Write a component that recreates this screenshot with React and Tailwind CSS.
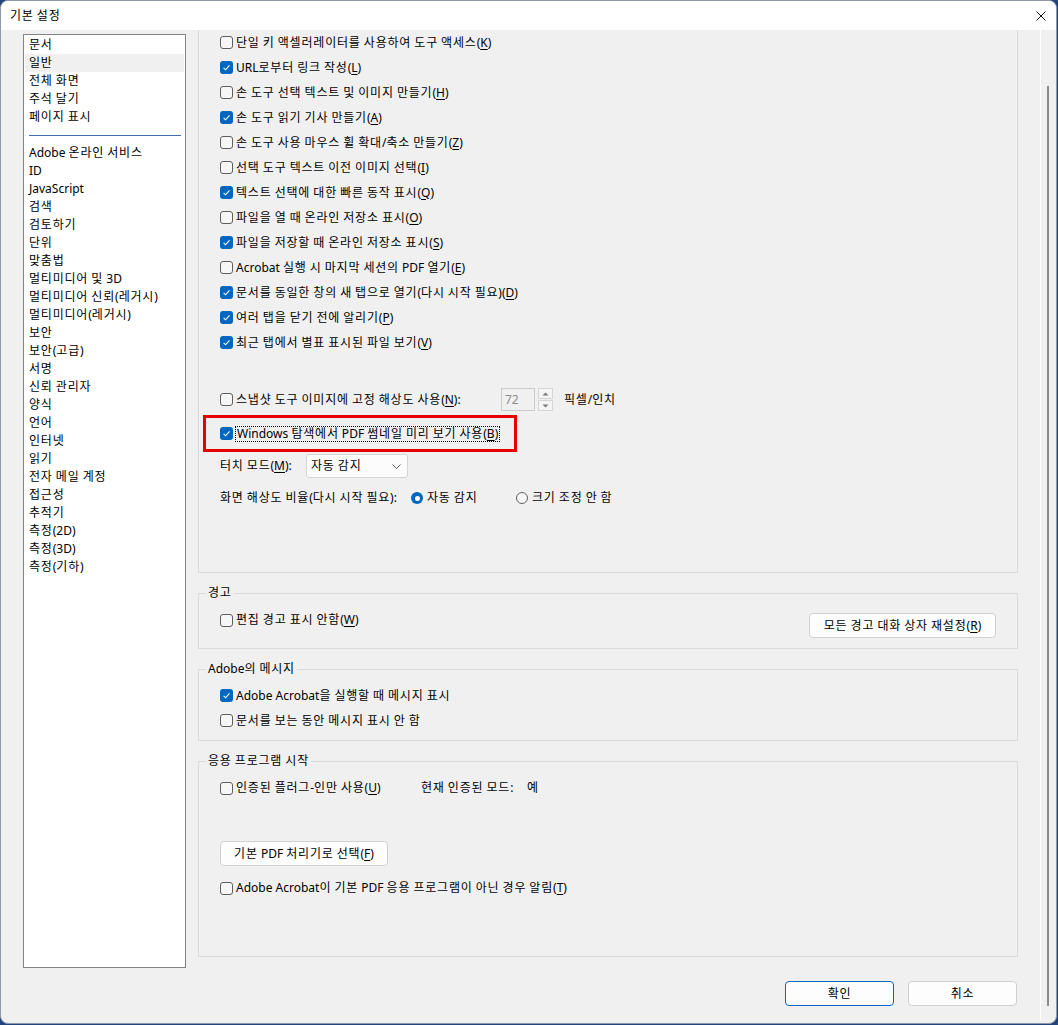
import React from "react";

const FONT = { fontFamily: '"Noto Sans", "Noto Sans CJK KR", sans-serif' };

function Han({ s }) {
  const parts = s.split(/([\uAC00-\uD7A3]+)/);
  return (
    <>
      {parts.map((p, i) =>
        i % 2 === 1 ? (
          <span key={i} className="tracking-[0.8px]">
            {p}
          </span>
        ) : (
          <React.Fragment key={i}>{p}</React.Fragment>
        )
      )}
    </>
  );
}

function Txt({ s }) {
  const i = s.indexOf("&");
  if (i < 0) return <Han s={s} />;
  return (
    <>
      <Han s={s.slice(0, i)} />
      <u className="underline underline-offset-2">{s[i + 1]}</u>
      <Han s={s.slice(i + 2)} />
    </>
  );
}

function Box({ checked }) {
  if (checked)
    return (
      <span className="flex h-[13px] w-[13px] shrink-0 items-center justify-center rounded-[3px] bg-[#0067c0]">
        <svg width="13" height="13" viewBox="0 0 13 13">
          <path d="M3.6 6.9 L5.6 8.8 L9.5 4.4" fill="none" stroke="#ffffff" strokeWidth="1.1" />
        </svg>
      </span>
    );
  return <span className="h-[13px] w-[13px] shrink-0 rounded-[3px] border border-[#5f5f5f] bg-[#f6f6f6]" />;
}

function Check({ checked, label, className = "" }) {
  return (
    <div className={"flex items-center gap-[3px] " + className}>
      <Box checked={checked} />
      <span className="whitespace-nowrap">
        <Txt s={label} />
      </span>
    </div>
  );
}

function Radio({ checked, label, className = "" }) {
  return (
    <div className={"flex items-center gap-[4px] " + className}>
      {checked ? (
        <span className="flex h-[12px] w-[12px] shrink-0 items-center justify-center rounded-full bg-[#0067c0]">
          <span className="h-[5px] w-[5px] rounded-full bg-white" />
        </span>
      ) : (
        <span className="h-[12px] w-[12px] shrink-0 rounded-full border border-[#5f5f5f] bg-[#f6f6f6]" />
      )}
      <span className="whitespace-nowrap">
        <Txt s={label} />
      </span>
    </div>
  );
}

function Button({ label, className = "", primary }) {
  return (
    <div
      className={
        "flex h-[25px] items-center justify-center rounded-[4px] bg-[#fdfdfd] " +
        (primary ? "border border-[#0067c0] " : "border border-[#d0d0d0] ") +
        className
      }
    >
      <span className="whitespace-nowrap">
        <Txt s={label} />
      </span>
    </div>
  );
}

function Group({ title, children, className = "" }) {
  return (
    <fieldset className={"w-[820px] border border-[#dadada] pl-[7px] " + className}>
      <legend className="h-[18px] whitespace-nowrap px-[2px] leading-[18px]">
        <Txt s={title} />
      </legend>
      {children}
    </fieldset>
  );
}

const top = [
  [false, "단일 키 액셀러레이터를 사용하여 도구 액세스(&K)"],
  [true, "URL로부터 링크 작성(&L)"],
  [false, "손 도구 선택 텍스트 및 이미지 만들기(&H)"],
  [true, "손 도구 읽기 기사 만들기(&A)"],
  [false, "손 도구 사용 마우스 휠 확대/축소 만들기(&Z)"],
  [false, "선택 도구 텍스트 이전 이미지 선택(&I)"],
  [true, "텍스트 선택에 대한 빠른 동작 표시(&Q)"],
  [false, "파일을 열 때 온라인 저장소 표시(&O)"],
  [true, "파일을 저장할 때 온라인 저장소 표시(&S)"],
  [false, "Acrobat 실행 시 마지막 세션의 PDF 열기(&E)"],
  [true, "문서를 동일한 창의 새 탭으로 열기(다시 시작 필요)(&D)"],
  [true, "여러 탭을 닫기 전에 알리기(&P)"],
  [true, "최근 탭에서 별표 표시된 파일 보기(&V)"],
];

const list1 = ["문서", "일반", "전체 화면", "주석 달기", "페이지 표시"];
const list2 = [
  "Adobe 온라인 서비스",
  "ID",
  "JavaScript",
  "검색",
  "검토하기",
  "단위",
  "맞춤법",
  "멀티미디어 및 3D",
  "멀티미디어 신뢰(레거시)",
  "멀티미디어(레거시)",
  "보안",
  "보안(고급)",
  "서명",
  "신뢰 관리자",
  "양식",
  "언어",
  "인터넷",
  "읽기",
  "전자 메일 계정",
  "접근성",
  "추적기",
  "측정(2D)",
  "측정(3D)",
  "측정(기하)",
];

export default function App() {
  return (
    <div className="h-[1025px] w-[1058px] bg-[#24447c] text-[12px] text-black" style={FONT}>
      <div className="flex h-[1024px] w-[1057px] flex-col overflow-hidden rounded-[8px] border border-[#8d99a8] bg-[#f0f0f0]">
        {/* title bar */}
        <div className="flex h-[29px] shrink-0 items-center justify-between bg-white pl-[9px] pr-[9px]">
          <span className="whitespace-nowrap text-[12px]">
            <Txt s="기본 설정" />
          </span>
          <svg width="10" height="10" viewBox="0 0 10 10" className="mr-[1px]">
            <path d="M0.5 0.5 L9.5 9.5 M9.5 0.5 L0.5 9.5" stroke="#111" strokeWidth="1" />
          </svg>
        </div>

        {/* body */}
        <div className="flex flex-1">
          {/* category list */}
          <div className="ml-[22px] mt-[4px] h-[934px] w-[163px] shrink-0 border border-[#848484] bg-white pt-[1px]">
            {list1.map((t) => (
              <div
                key={t}
                className={
                  "mx-[1px] h-[18px] whitespace-nowrap pl-[4px] leading-[18px] " +
                  (t === "일반" ? "bg-[#f0f0f0]" : "")
                }
              >
                <Txt s={t} />
              </div>
            ))}
            <div className="flex h-[18px] items-center pl-[5px] pr-[4px]">
              <div className="h-[1px] w-full bg-[#3f6fa6]" />
            </div>
            {list2.map((t) => (
              <div key={t} className="mx-[1px] h-[18px] whitespace-nowrap pl-[4px] leading-[18px]">
                <Txt s={t} />
              </div>
            ))}
          </div>

          {/* content */}
          <div className="ml-[12px] flex w-[820px] shrink-0 flex-col">
            {/* general group (scrolled) */}
            <div className="h-[543px] w-[820px] border-x border-b border-[#dadada] pl-[21px]">
              {top.map(([c, l]) => (
                <Check key={l} checked={c} label={l} className="h-[25px]" />
              ))}
              <div className="mt-[32px] flex h-[25px] items-center">
                <Check checked={false} label="스냅샷 도구 이미지에 고정 해상도 사용(&N):" className="w-[281px]" />
                <div className="flex h-[23px] w-[34px] items-center border border-[#cccccc] bg-[#f0f0f0] pl-[3px] text-[#8c8c8c]">
                  72
                </div>
                <div className="ml-[3px] flex h-[23px] w-[15px] flex-col gap-[1px]">
                  <div className="flex flex-1 items-center justify-center border border-[#d6d6d6] bg-[#f5f5f5]">
                    <svg width="7" height="4" viewBox="0 0 7 4">
                      <path d="M0.5 3.5 L3.5 0.5 L6.5 3.5 Z" fill="#7a7a7a" />
                    </svg>
                  </div>
                  <div className="flex flex-1 items-center justify-center border border-[#d6d6d6] bg-[#f5f5f5]">
                    <svg width="7" height="4" viewBox="0 0 7 4">
                      <path d="M0.5 0.5 L3.5 3.5 L6.5 0.5 Z" fill="#7a7a7a" />
                    </svg>
                  </div>
                </div>
                <span className="ml-[11px] whitespace-nowrap">
                  <Txt s="픽셀/인치" />
                </span>
              </div>
              <div className="-ml-[17px] mt-[3px] flex h-[37px] w-[314px] items-center border-[3px] border-[#e60000] pl-[14px]">
                <Box checked />
                <span className="ml-[2px] whitespace-nowrap border border-dotted border-black px-[1px] leading-[14px]">
                  <Txt s="Windows 탐색에서 PDF 썸네일 미리 보기 사용(&B)" />
                </span>
              </div>
              <div className="mt-[2px] flex h-[24px] items-center">
                <span className="w-[86px] whitespace-nowrap">
                  <Txt s="터치 모드(&M):" />
                </span>
                <div className="flex h-[24px] w-[102px] items-center justify-between rounded-[3px] border border-[#d5d5d5] bg-[#fcfcfc] pl-[4px] pr-[6px]">
                  <span className="whitespace-nowrap">
                    <Txt s="자동 감지" />
                  </span>
                  <svg width="9" height="5" viewBox="0 0 9 5">
                    <path d="M0.5 0.5 L4.5 4.5 L8.5 0.5" fill="none" stroke="#5a5a5a" strokeWidth="1" />
                  </svg>
                </div>
              </div>
              <div className="mt-[8px] flex h-[24px] items-center">
                <span className="w-[191px] whitespace-nowrap">
                  <Txt s="화면 해상도 비율(다시 시작 필요):" />
                </span>
                <Radio checked label="자동 감지" className="w-[105px]" />
                <Radio checked={false} label="크기 조정 안 함" />
              </div>
            </div>

            {/* 경고 */}
            <Group title="경고" className="mt-[11px] pb-[10px] pr-[21px]">
              <div className="mt-[6px] flex items-start justify-between pl-[14px]">
                <Check checked={false} label="편집 경고 표시 안함(&W)" className="h-[24px]" />
                <Button className="mt-[5px] w-[187px]" label="모든 경고 대화 상자 재설정(&R)" />
              </div>
            </Group>

            {/* Adobe의 메시지 */}
            <Group title="Adobe의 메시지" className="mt-[11px] pb-[7px]">
              <div className="mt-[5px] pl-[14px]">
                <Check checked label="Adobe Acrobat을 실행할 때 메시지 표시" className="h-[25px]" />
                <Check checked={false} label="문서를 보는 동안 메시지 표시 안 함" className="h-[25px]" />
              </div>
            </Group>

            {/* 응용 프로그램 시작 */}
            <Group title="응용 프로그램 시작" className="mt-[11px] pb-[56px]">
              <div className="pl-[14px]">
                <div className="mt-[6px] flex h-[24px] items-center">
                  <Check checked={false} label="인증된 플러그-인만 사용(&U)" className="w-[201px]" />
                  <span className="w-[106px] whitespace-nowrap">
                    <Txt s="현재 인증된 모드:" />
                  </span>
                  <span>
                    <Txt s="예" />
                  </span>
                </div>
                <Button className="mt-[41px] w-[168px]" label="기본 PDF 처리기로 선택(&F)" />
                <Check
                  checked={false}
                  label="Adobe Acrobat이 기본 PDF 응용 프로그램이 아닌 경우 알림(&T)"
                  className="mt-[10px] h-[24px]"
                />
              </div>
            </Group>

            {/* dialog buttons */}
            <div className="mt-[24px] flex justify-end gap-[14px] pr-[1px]">
              <Button primary className="w-[109px]" label="확인" />
              <Button className="w-[109px]" label="취소" />
            </div>
          </div>

          {/* scroll region */}
          <div className="ml-[22px] h-[990px] w-[1px] shrink-0 bg-white" />
          <div className="ml-[6px] mt-[56px] h-[920px] w-[2px] shrink-0 bg-[#8a8a8a]" />
        </div>
      </div>
    </div>
  );
}
